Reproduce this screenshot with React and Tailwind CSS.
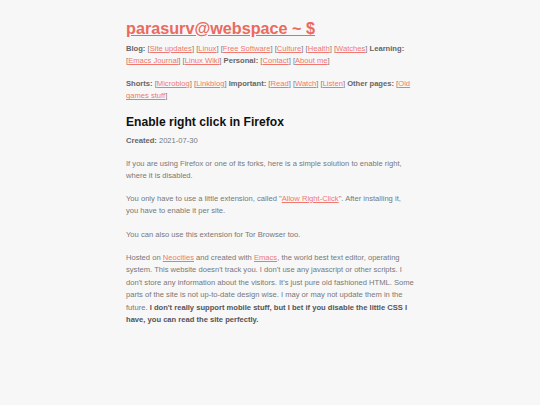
import React from "react";

const LINK = "text-[#f0786e] underline";

function L({ children }) {
  return (
    <>
      [<a href="#" className={LINK}>{children}</a>]
    </>
  );
}

export default function App() {
  return (
    <div className="min-h-[405px] bg-[#f7f7f7] font-['Liberation_Sans',Arial,sans-serif] text-[#777] text-[7.6px] leading-[12.4px]">
      <div className="mx-auto w-[288px] pt-[16px] pb-6">
        <h1 className="text-[16.2px] leading-[24px] font-bold">
          <a href="#" className="text-[#ea6a60] underline">parasurv@webspace ~ $</a>
        </h1>

        <nav className="mt-[3px]">
          <b className="text-[#666]">Blog:</b> <L>Site updates</L> <L>Linux</L> <L>Free Software</L>{" "}
          <L>Culture</L> <L>Health</L> <L>Watches</L> <b className="text-[#666]">Learning:</b>{" "}
          <L>Emacs Journal</L> <L>Linux Wiki</L> <b className="text-[#666]">Personal:</b> <L>Contact</L>{" "}
          <L>About me</L>
        </nav>

        <nav className="mt-[10px]">
          <b className="text-[#666]">Shorts:</b> <L>Microblog</L> <L>Linkblog</L>{" "}
          <b className="text-[#666]">Important:</b> <L>Read</L> <L>Watch</L> <L>Listen</L>{" "}
          <b className="text-[#666]">Other pages:</b> <L>Old games stuff</L>
        </nav>

        <h2 className="mt-[10px] text-[12.1px] leading-[18px] font-bold text-[#111]">
          Enable right click in Firefox
        </h2>

        <p className="mt-[4px]">
          <b className="text-[#666]">Created:</b> 2021-07-30
        </p>

        <p className="mt-[11px]">
          If you are using Firefox or one of its forks, here is a simple solution to enable right, where
          it is disabled.
        </p>

        <p className="mt-[10px]">
          You only have to use a little extension, called "
          <a href="#" className={LINK}>Allow Right-Click</a>". After installing it, you have to enable it
          per site.
        </p>

        <p className="mt-[11px]">You can also use this extension for Tor Browser too.</p>

        <p className="mt-[11px]">
          Hosted on <a href="#" className={LINK}>Neocities</a> and created with{" "}
          <a href="#" className={LINK}>Emacs</a>, the world best text editor, operating system. This
          website doesn't track you. I don't use any javascript or other scripts. I don't store any
          information about the visitors. It's just pure old fashioned HTML. Some parts of the site is
          not up-to-date design wise. I may or may not update them in the future.{" "}
          <b className="text-[#555]">
            I don't really support mobile stuff, but I bet if you disable the little CSS I have, you can
            read the site perfectly.
          </b>
        </p>
      </div>
    </div>
  );
}
